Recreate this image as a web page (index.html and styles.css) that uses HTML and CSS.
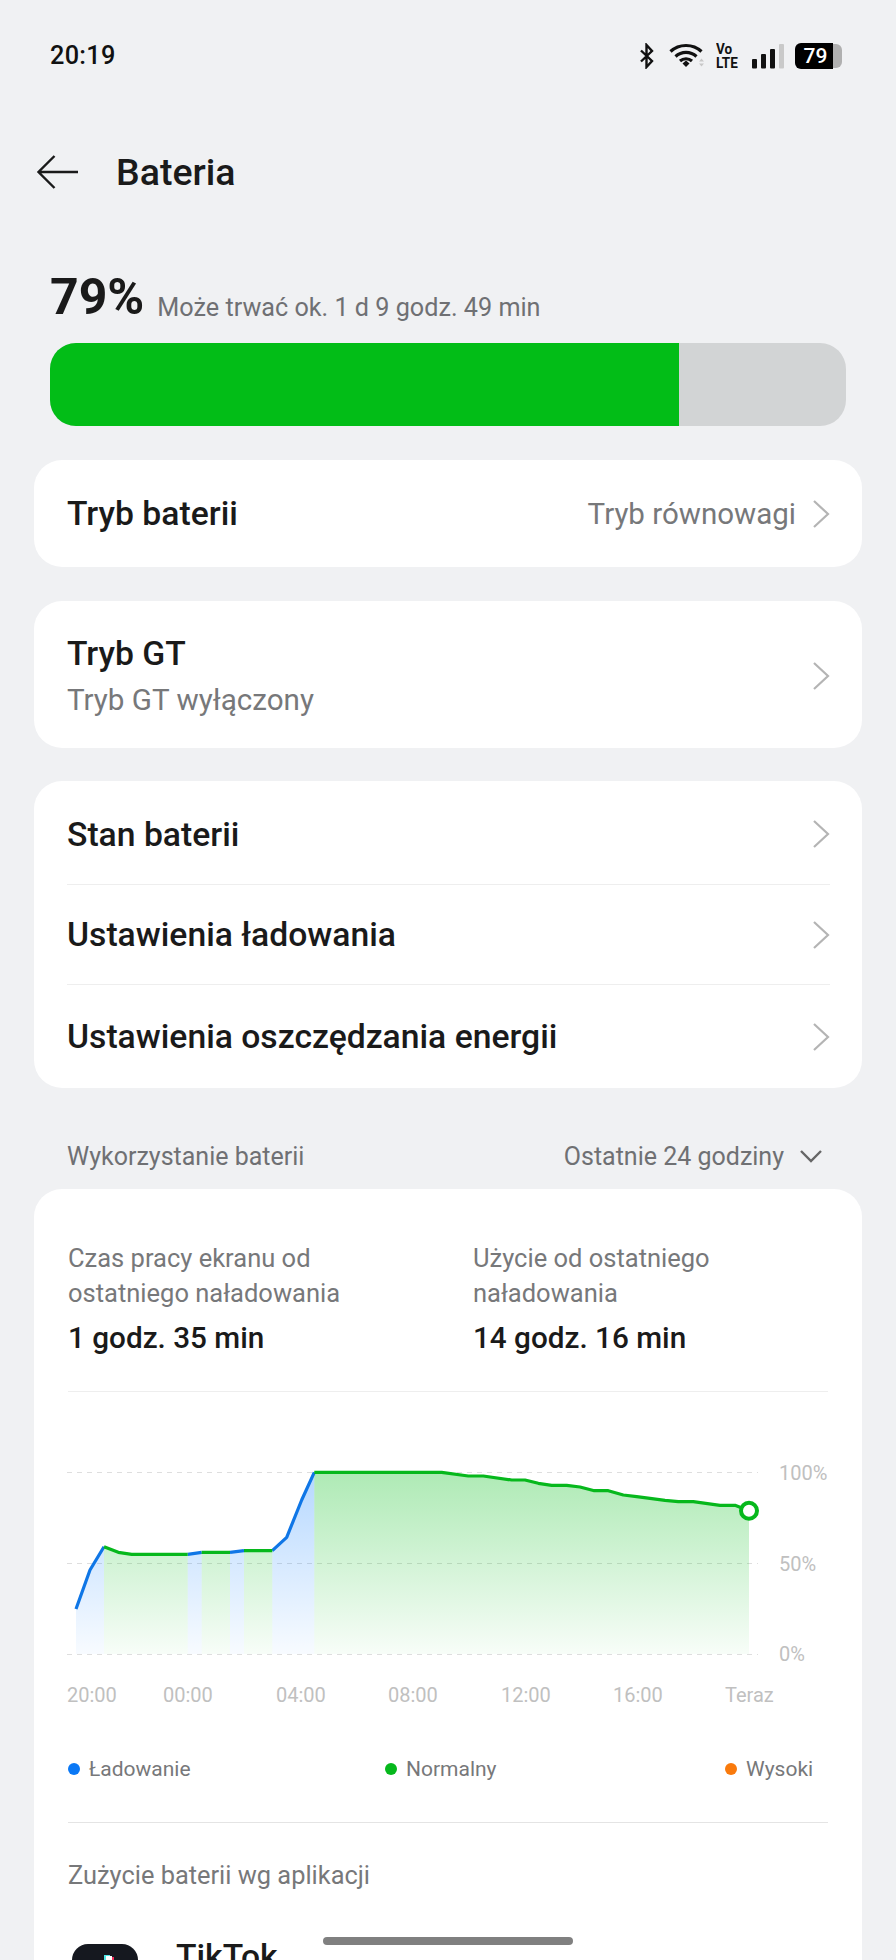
FILE: index.html
```html
<!DOCTYPE html>
<html lang="pl">
<head>
<meta charset="utf-8">
<title>Bateria</title>
<link rel="stylesheet" href="styles.css">
</head>
<body>
<div class="screen">
  <header class="status">
    <span class="time">20:19</span>
    <div class="status-icons">
      <svg class="i-bt" width="16" height="26" viewBox="0 0 16 26"><path d="M2 7.500 13 18 7.500 24V2L13 8 2 18.500" fill="none" stroke="#111" stroke-width="2.400"/></svg>
      <svg class="i-wifi" width="36" height="26" viewBox="0 0 36 26"><path d="M1.500 8.500C10 .5 24 .5 32.500 8.500M6.500 13.500C12.500 8 21.500 8 27.500 13.500M11 18C14.500 15 19.500 15 23 18" fill="none" stroke="#111" stroke-width="3.200"/><path d="M13.500 20.500 17 17.500 20.500 20.500 17 24Z" fill="#111"/><path d="M30 18.500l2.500-3 2.500 3ZM30 20.500l2.500 3 2.500-3Z" fill="#c8c8c8"/></svg>
      <div class="i-volte"><span>Vo</span><span>LTE</span></div>
      <svg class="i-signal" width="32" height="26" viewBox="0 0 32 26"><g fill="#111"><rect x="0" y="16" width="5" height="9.500" rx="1"/><rect x="9" y="11" width="5" height="14.500" rx="1"/><rect x="18" y="6" width="5" height="19.500" rx="1"/></g><rect x="27" y="1" width="5" height="24.500" rx="1" fill="#c9c9c9"/></svg>
      <div class="i-batt"><span class="i-batt-body">79</span><span class="i-batt-rest"></span></div>
    </div>
  </header>

  <nav class="title-bar">
    <svg class="back" width="44" height="36" viewBox="0 0 44 36"><path d="M42 18H3M18.500 2 2.500 18 18.500 34" fill="none" stroke="#1a1a1a" stroke-width="2.400"/></svg>
    <h1 class="title">Bateria</h1>
  </nav>

  <section class="level">
    <div class="level-head"><span class="pct">79%</span><span class="est">Może trwać ok. 1 d 9 godz. 49 min</span></div>
    <div class="bar"><div class="bar-fill"></div></div>
  </section>

  <section class="card row row-single">
    <span class="row-label">Tryb baterii</span>
    <span class="row-value">Tryb równowagi</span>
    <svg class="chev" width="18" height="30" viewBox="0 0 18 30"><path d="M2 2 16 15 2 28" fill="none" stroke="#b4b4b4" stroke-width="2.200"/></svg>
  </section>

  <section class="card row row-double">
    <div class="row-text"><span class="row-label">Tryb GT</span><span class="row-sub">Tryb GT wyłączony</span></div>
    <svg class="chev" width="18" height="30" viewBox="0 0 18 30"><path d="M2 2 16 15 2 28" fill="none" stroke="#b4b4b4" stroke-width="2.200"/></svg>
  </section>

  <section class="card list">
    <div class="row list-row"><span class="row-label">Stan baterii</span><svg class="chev" width="18" height="30" viewBox="0 0 18 30"><path d="M2 2 16 15 2 28" fill="none" stroke="#b4b4b4" stroke-width="2.200"/></svg></div>
    <div class="row list-row"><span class="row-label">Ustawienia ładowania</span><svg class="chev" width="18" height="30" viewBox="0 0 18 30"><path d="M2 2 16 15 2 28" fill="none" stroke="#b4b4b4" stroke-width="2.200"/></svg></div>
    <div class="row list-row"><span class="row-label">Ustawienia oszczędzania energii</span><svg class="chev" width="18" height="30" viewBox="0 0 18 30"><path d="M2 2 16 15 2 28" fill="none" stroke="#b4b4b4" stroke-width="2.200"/></svg></div>
  </section>

  <div class="usage-head">
    <span>Wykorzystanie baterii</span>
    <span class="range">Ostatnie 24 godziny<svg width="24" height="14" viewBox="0 0 24 14"><path d="M2 2 12 12 22 2" fill="none" stroke="#666" stroke-width="2.400"/></svg></span>
  </div>

  <section class="card usage">
    <div class="stats">
      <div class="stat"><p class="stat-label">Czas pracy ekranu od ostatniego naładowania</p><p class="stat-value">1 godz. 35 min</p></div>
      <div class="stat"><p class="stat-label">Użycie od ostatniego naładowania</p><p class="stat-value">14 godz. 16 min</p></div>
    </div>

    <svg class="chart" width="828" height="300" viewBox="34 1420 828 300">
      <defs>
        <linearGradient id="gg" gradientUnits="userSpaceOnUse" x1="0" y1="1472" x2="0" y2="1654"><stop offset="0" stop-color="#02bd17" stop-opacity=".32"/><stop offset="1" stop-color="#02bd17" stop-opacity=".03"/></linearGradient>
        <linearGradient id="gb" gradientUnits="userSpaceOnUse" x1="0" y1="1472" x2="0" y2="1654"><stop offset="0" stop-color="#0a7cff" stop-opacity=".3"/><stop offset="1" stop-color="#0a7cff" stop-opacity=".03"/></linearGradient>
      </defs>
      <g stroke="#dedede" stroke-width="1.200" stroke-dasharray="5 5"><path d="M67 1472.500H758M67 1563.500H758M67 1654.500H758"/></g>
      <path fill="url(#gb)" d="M76 1609 90 1570 104 1546.700V1654H76ZM187.700 1554.300 201.700 1552.300V1654H187.700ZM230 1552.300 244 1550.700V1654H230ZM272.300 1550.700 286.700 1537.300 301.700 1500 314.300 1472.300V1654H272.300Z"/>
      <path fill="url(#gg)" d="M104 1546.700 118.300 1552.300 131.700 1554.300H187.700V1654H104ZM201.700 1552.300H230V1654H201.700ZM244 1550.700H272.300V1654H244ZM314.300 1472.300H441.700L468.300 1476H483.300L511.700 1480H525L538.300 1483.300 551.700 1485.300H566.700L580 1487 594.300 1490.700H608.300L623.300 1495 636.700 1496.700 650 1498.300 665 1500.300 678.300 1501.700H693.300L720 1505.300H735L749 1510.700V1654H314.300Z"/>
      <g fill="none" stroke-width="3.200" stroke-linejoin="round">
        <path stroke="#0f76e6" d="M76 1609 90 1570 104 1546.700M187.700 1554.300 201.700 1552.300M230 1552.300 244 1550.700M272.300 1550.700 286.700 1537.300 301.700 1500 314.300 1472.300"/>
        <path stroke="#06b81c" d="M104 1546.700 118.300 1552.300 131.700 1554.300H187.700M201.700 1552.300H230M244 1550.700H272.300M314.300 1472.300H441.700L468.300 1476H483.300L511.700 1480H525L538.300 1483.300 551.700 1485.300H566.700L580 1487 594.300 1490.700H608.300L623.300 1495 636.700 1496.700 650 1498.300 665 1500.300 678.300 1501.700H693.300L720 1505.300H735L749 1510.700"/>
      </g>
      <circle cx="749" cy="1510.700" r="8" fill="#fff" stroke="#06b81c" stroke-width="4"/>
      <g class="axis">
        <text x="779" y="1480">100%</text><text x="779" y="1571">50%</text><text x="779" y="1661">0%</text>
        <text x="67" y="1702">20:00</text><text x="163" y="1702">00:00</text><text x="276" y="1702">04:00</text><text x="388" y="1702">08:00</text><text x="501" y="1702">12:00</text><text x="613" y="1702">16:00</text><text x="725" y="1702">Teraz</text>
      </g>
    </svg>

    <div class="legend">
      <span class="key"><i class="dot dot-blue"></i>Ładowanie</span>
      <span class="key"><i class="dot dot-green"></i>Normalny</span>
      <span class="key"><i class="dot dot-orange"></i>Wysoki</span>
    </div>

    <div class="apps">
      <h2 class="apps-title">Zużycie baterii wg aplikacji</h2>
      <div class="app">
        <svg class="app-icon" width="66" height="66" viewBox="0 0 66 66"><rect width="66" height="66" rx="16" fill="#15181f"/><path d="M35 11v28a8 8 0 1 1-7-8" fill="none" stroke="#4fe6e6" stroke-width="6"/><path d="M39 13v28a8 8 0 1 1-7-8" fill="none" stroke="#f0305c" stroke-width="6"/><path d="M37 12v28a8 8 0 1 1-7-8" fill="none" stroke="#fff" stroke-width="6"/></svg>
        <span class="app-name">TikTok</span>
      </div>
    </div>
  </section>

  <div class="home-bar"></div>
</div>
</body>
</html>
```
FILE: styles.css
```css
* { box-sizing: border-box; }
html, body { margin: 0; padding: 0; }
body { background: #f0f1f3; font-family: Roboto, "Noto Sans", sans-serif; color: #1a1a1a; }
p, h1, h2 { margin: 0; font-weight: inherit; }
.screen { position: relative; width: 896px; height: 1960px; overflow: hidden; }

.status { display: flex; justify-content: space-between; align-items: center; height: 111px; padding: 0 54px 0 50px; }
.time { font-size: 25.300px; font-weight: 500; color: #111; letter-spacing: .3px; }
.status-icons { display: flex; align-items: center; gap: 9px; }
.i-bt { margin-right: 5px; }
.i-volte { display: flex; flex-direction: column; font-size: 13.500px; line-height: 12.500px; font-weight: 700; color: #111; width: 24px; margin-left: 2px; transform: scaleY(1.1); }
.i-signal { margin-left: 3px; }
.i-batt { display: flex; align-items: center; margin-left: 2px; }
.i-batt-body { width: 38px; height: 26px; background: #000; border-radius: 6px 0 0 6px; color: #fff; font-size: 21px; font-weight: 500; line-height: 26px; text-align: center; padding-left: 3px; }
.i-batt-rest { width: 9px; height: 24px; background: #b0b0b0; border-radius: 0 6px 6px 0; }

.title-bar { display: flex; align-items: center; gap: 36px; height: 64px; padding-left: 36px; margin-top: 29px; }
.title { font-size: 37.500px; font-weight: 500; color: #1a1a1a; }

.level { padding: 0 50px; margin-top: 69px; }
.level-head { height: 48px; white-space: nowrap; }
.pct { font-size: 50px; font-weight: 700; line-height: 48px; }
.est { font-size: 25.200px; color: #6f7073; margin-left: 13px; vertical-align: -2px; }
.bar { height: 83px; margin-top: 22px; border-radius: 26px; background: #d2d4d5; overflow: hidden; }
.bar-fill { width: 79%; height: 100%; background: #02bd17; }

.card { background: #fff; border-radius: 28px; margin: 0 34px; }
.row { display: flex; align-items: center; }
.row-label { font-size: 33.700px; font-weight: 500; color: #1a1a1a; }
.row-value { margin-left: auto; font-size: 29.500px; color: #77787a; margin-right: 16px; }
.chev { flex: none; }
.row-single { height: 107px; margin-top: 34px; padding: 0 32px 0 33px; }
.row-double { height: 147px; margin-top: 34px; padding: 2px 32px 0 33px; justify-content: space-between; }
.row-text { display: flex; flex-direction: column; gap: 10px; }
.row-sub { font-size: 29.600px; color: #77787a; }

.list { margin-top: 33px; padding: 0 32px 0 33px; height: 307px; display: grid; grid-template-rows: 104px 100px 1fr; }
.list-row { justify-content: space-between; border-bottom: 1px solid #eeeeee; }
.list-row:first-child { padding-top: 3px; }
.list-row:last-child { border-bottom: 0; }

.usage-head { display: flex; justify-content: space-between; align-items: center; height: 101px; padding: 35px 73px 0 67px; font-size: 25px; color: #6f7073; }
.range { display: flex; align-items: center; gap: 15px; }

.usage { padding: 0 34px; height: 900px; }
.stats { display: grid; grid-template-columns: 405px 1fr; padding-top: 52px; height: 203px; border-bottom: 1px solid #eeeeee; }
.stat { padding-right: 100px; }
.stat-label { font-size: 25.500px; line-height: 35px; color: #77787a; }
.stat-value { font-size: 29.700px; font-weight: 500; margin-top: 9px; color: #1a1a1a; }

.chart { display: block; margin: 28px -34px 0; }
.axis text { font-family: Roboto, sans-serif; font-size: 20px; fill: #c0c0c0; }

.legend { display: grid; grid-template-columns: 317px 340px auto; padding-top: 36px; }
.key { display: flex; align-items: center; gap: 9px; font-size: 21px; line-height: 26px; color: #77787a; }
.dot { width: 12px; height: 12px; border-radius: 50%; }
.dot-blue { background: #0a78f5; }
.dot-green { background: #06b81c; }
.dot-orange { background: #f97a0c; }

.apps { margin-top: 40px; border-top: 1px solid #e4e4e4; padding-top: 37px; }
.apps-title { font-size: 25.400px; line-height: 30px; color: #77787a; }
.app { display: flex; align-items: flex-start; gap: 38px; margin-top: 54px; }
.app-icon { margin-left: 4px; flex: none; }
.app-name { font-size: 33.700px; font-weight: 500; margin-top: -7px; }

.home-bar { position: absolute; left: 323px; bottom: 15px; width: 250px; height: 8px; border-radius: 4px; background: #808080; }
```
